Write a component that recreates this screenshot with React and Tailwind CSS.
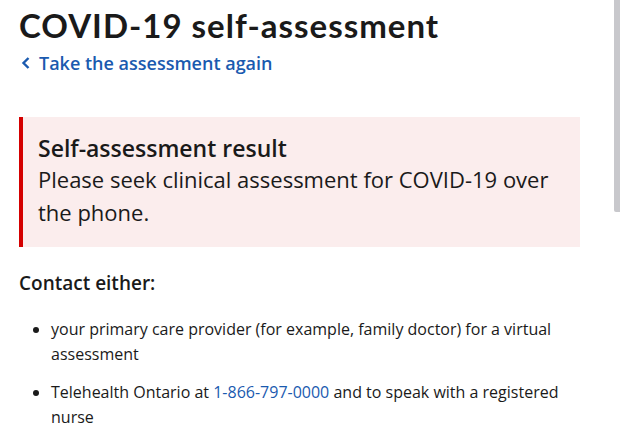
export default function App() {
  return (
    <div className="relative min-h-screen bg-white text-[#1a1a1a]" style={{ fontFamily: '"Open Sans", sans-serif' }}>
      <div className="pl-[19px] pr-[40px] pt-[3px]">
        <h1 className="text-[33px] font-bold leading-[44px] tracking-[1px] text-[#1a1a1a]" style={{ fontFamily: 'Lato, "Open Sans", sans-serif' }}>
          COVID-19 self-assessment
        </h1>
        <a href="#" className="mt-[2px] flex items-center gap-[8px] text-[18px] font-semibold leading-[28px] text-[#1a5aaf]">
          <svg width="10" height="14" viewBox="0 0 10 14" className="ml-[2px]">
            <path d="M7.5 2 L2.5 7 L7.5 12" fill="none" stroke="#1a5aaf" strokeWidth="2.4" />
          </svg>
          Take the assessment again
        </a>

        <div className="mt-[40px] border-l-[4px] border-[#d40000] bg-[#fbeded] pl-[15px] pr-[16px] pt-[16px] pb-[18px]">
          <div className="text-[23px] font-semibold leading-[30px]">Self-assessment result</div>
          <p className="text-[22px] leading-[33px]">
            Please seek clinical assessment for COVID-19 over the phone.
          </p>
        </div>

        <p className="mt-[22px] text-[19px] font-semibold leading-[28px]">Contact either:</p>

        <ul className="mt-[20px] list-disc pl-[32px] text-[16px] leading-[25px]">
          <li className="pr-[20px]">
            your primary care provider (for example, family doctor) for a virtual assessment
          </li>
          <li className="mt-[13px] pr-[20px]">
            Telehealth Ontario at <a href="#" className="text-[#1a5aaf]">1-866-797-0000</a> and to speak with a registered nurse
          </li>
        </ul>
      </div>
      <div className="absolute right-0 top-0 h-[212px] w-[6px] rounded-bl-[2px] bg-[#c8c8cc]" />
    </div>
  );
}
